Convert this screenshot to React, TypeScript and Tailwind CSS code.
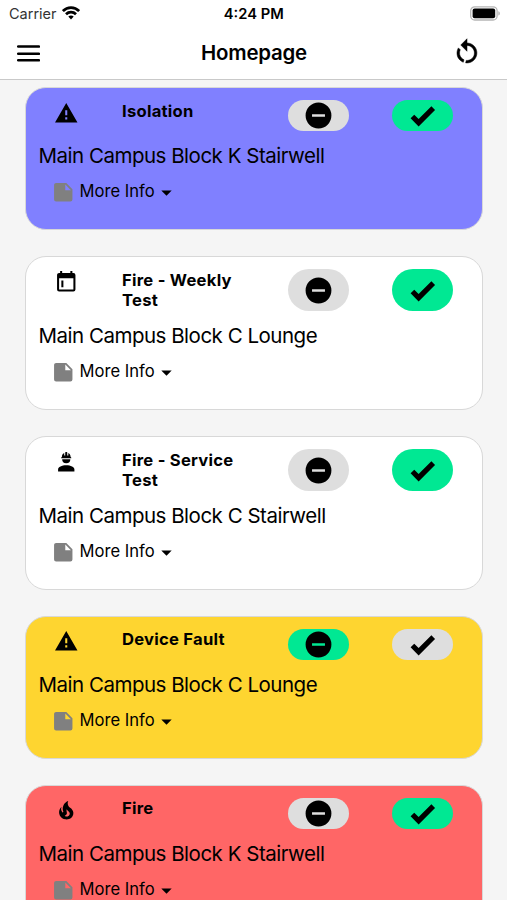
import clsx from "clsx";

const icons = {
  alert: "M13 14H11V9H13M13 18H11V16H13M1 21H23L12 2L1 21Z",
  calendar:
    "M7.2,10.2H9.2V17H7.2M19,19H5V8H19M19,3H18V1H16V3H8V1H6V3H5C3.89,3 3,3.9 3,5V19A2,2 0 0,0 5,21H19A2,2 0 0,0 21,19V5A2,2 0 0,0 19,3Z",
  engineer:
    "M12,15C7.58,15 4,16.79 4,19V21H20V19C20,16.79 16.42,15 12,15M8,9A4,4 0 0,0 12,13A4,4 0 0,0 16,9M11.5,2C11.2,2 11,2.21 11,2.5V5.5H10V3C10,3 7.75,3.86 7.75,6.75C7.75,6.75 7,6.89 7,8H17C16.95,6.89 16.25,6.75 16.25,6.75C16.25,3.86 14,3 14,3V5.5H13V2.5C13,2.21 12.81,2 12.5,2H11.5Z",
  fire: "M17.66 11.2C17.43 10.9 17.15 10.64 16.89 10.38C16.22 9.78 15.46 9.35 14.82 8.72C13.33 7.26 13 4.85 13.95 3C13 3.23 12.17 3.75 11.46 4.32C8.87 6.4 7.85 10.07 9.07 13.22C9.11 13.32 9.15 13.42 9.15 13.55C9.15 13.77 9 13.97 8.8 14.05C8.57 14.15 8.33 14.09 8.14 13.93C8.08 13.88 8.04 13.83 8 13.76C6.87 12.33 6.69 10.28 7.45 8.64C5.78 10 4.87 12.3 5 14.47C5.06 14.97 5.12 15.47 5.29 15.97C5.43 16.57 5.7 17.17 6 17.7C7.08 19.43 8.95 20.67 10.96 20.92C13.1 21.19 15.39 20.8 17.03 19.32C18.86 17.66 19.5 15 18.56 12.72L18.43 12.46C18.22 12 17.66 11.2 17.66 11.2M14.5 17.5C14.22 17.74 13.76 18 13.4 18.1C12.28 18.5 11.16 17.94 10.5 17.28C11.69 17 12.4 16.12 12.61 15.23C12.78 14.43 12.46 13.77 12.33 13C12.21 12.26 12.23 11.63 12.5 10.94C12.69 11.32 12.89 11.7 13.13 12C13.9 13 15.11 13.44 15.37 14.8C15.41 14.94 15.43 15.08 15.43 15.23C15.46 16.05 15.1 16.95 14.5 17.5Z",
  restart:
    "M12,4C14.1,4 16.1,4.8 17.6,6.3C20.7,9.4 20.7,14.5 17.6,17.6C15.8,19.5 13.3,20.2 10.9,19.9L11.4,17.9C13.1,18.1 14.9,17.5 16.2,16.2C18.5,13.9 18.5,10.1 16.2,7.7C15.1,6.6 13.5,6 12,6V10.6L7,5.6L12,0.6V4M6.3,17.6C3.7,15 3.3,11 5.1,7.9L6.6,9.4C5.5,11.6 5.9,14.4 7.8,16.2C8.3,16.7 8.9,17.1 9.6,17.4L9,19.4C8,19 7.1,18.4 6.3,17.6Z",
  minus: "M17,13H7V11H17M12,2A10,10 0 0,0 2,12A10,10 0 0,0 12,22A10,10 0 0,0 22,12A10,10 0 0,0 12,2Z",
  check: "M9,20.42L2.79,14.21L5.62,11.38L9,14.77L18.88,4.88L21.71,7.71L9,20.42Z",
  note: "M14,10V4.5L19.5,10M5,3C3.89,3 3,3.89 3,5V19A2,2 0 0,0 5,21H19A2,2 0 0,0 21,19V9L15,3H5Z",
  caret: "M7,10L12,15L17,10H7Z",
};

type IconName = keyof typeof icons;

function Icon({ name, className }: { name: IconName; className?: string }) {
  return (
    <svg viewBox="0 0 24 24" fill="currentColor" className={clsx("shrink-0", className)}>
      <path d={icons[name]} />
    </svg>
  );
}

type Event = {
  icon: IconName;
  title: string;
  place: string;
  color: string;
  accepted: boolean;
};

const events: Event[] = [
  { icon: "alert", title: "Isolation", place: "Main Campus Block K Stairwell", color: "bg-[#8080ff]", accepted: true },
  { icon: "calendar", title: "Fire - Weekly Test", place: "Main Campus Block C Lounge", color: "bg-white", accepted: true },
  { icon: "engineer", title: "Fire - Service Test", place: "Main Campus Block C Stairwell", color: "bg-white", accepted: true },
  { icon: "alert", title: "Device Fault", place: "Main Campus Block C Lounge", color: "bg-[#fed530]", accepted: false },
  { icon: "fire", title: "Fire", place: "Main Campus Block K Stairwell", color: "bg-[#ff6666]", accepted: true },
];

function PillButton({ icon, active, label, className }: { icon: IconName; active: boolean; label: string; className?: string }) {
  return (
    <button
      aria-label={label}
      className={clsx(
        "flex w-[61px] shrink-0 items-center justify-center rounded-[21px]",
        active ? "bg-[#00e893]" : "bg-[#dedede]",
        className
      )}
    >
      <Icon name={icon} className="size-[31px]" />
    </button>
  );
}

function EventCard({ event }: { event: Event }) {
  return (
    <article className={clsx("rounded-[21px] border border-[#d8d8d8] pt-3 pb-[25.2px]", event.color)}>
      <div className="flex min-h-[31px]">
        <Icon name={event.icon} className="mt-[0.5px] ml-7 size-[24.5px]" />
        <h2 className="ml-[43.5px] w-[130px] shrink-0 pt-[0.4px] text-[16.6px] leading-[20.7px] font-bold tracking-[0.25px]">
          {event.title}
        </h2>
        <PillButton icon="minus" active={!event.accepted} label="Dismiss" className="ml-[35.5px]" />
        <PillButton icon="check" active={event.accepted} label="Accept" className="ml-[43.5px]" />
      </div>
      <p className="mt-3 ml-[12.5px] text-[20.5px] leading-[26px] tracking-[-0.49px]">{event.place}</p>
      <button className="mt-[8.8px] ml-[24.5px] flex h-[26px] items-center">
        <Icon name="note" className="mt-[3px] size-[24.5px] text-[#808080]" />
        <span className="ml-[4.5px] text-[16.6px] leading-5">More Info</span>
        <Icon name="caret" className="mt-[3px] -ml-[0.5px] size-[25px]" />
      </button>
    </article>
  );
}

function StatusBar() {
  return (
    <div className="flex h-[27px] items-center justify-between pr-[6px] pl-[9px]">
      <div className="flex w-24 items-center gap-[5px] pt-px text-[14.5px] text-[#333]">
        Carrier
        <svg viewBox="0 0 18 14" className="mb-[2px] h-[14px] w-[18px] text-black" fill="none" stroke="currentColor" strokeWidth="2.7">
          <path d="M0.9 5.1C5.4 0.5 12.6 0.5 17.1 5.1" />
          <path d="M4 8.3C6.8 5.5 11.2 5.5 14 8.3" />
          <path d="M6.3 10.6C7.8 9.1 10.2 9.1 11.7 10.6L9 13.4Z" fill="currentColor" stroke="none" />
        </svg>
      </div>
      <span className="pr-[2.5px] pt-px text-[14.7px] font-semibold">4:24 PM</span>
      <div className="flex w-24 justify-end">
        <svg viewBox="0 0 31 15" className="h-[15px] w-[31px]">
          <rect x="0.7" y="0.8" width="26.4" height="13.2" rx="4" fill="#fff" stroke="#b5b5b5" strokeWidth="1.3" />
          <rect x="2.6" y="2.6" width="22.6" height="9.6" rx="2" />
          <path d="M28.3 5.2C30.4 5.8 30.4 9 28.3 9.6Z" fill="#b5b5b5" />
        </svg>
      </div>
    </div>
  );
}

export default function App() {
  return (
    <div className="h-[900px] w-full overflow-hidden bg-[#f5f5f5] font-['Inter',sans-serif] text-black">
      <header className="h-[80px] border-b border-[#c9c9c9] bg-white">
        <StatusBar />
        <div className="flex h-[52px] items-center justify-between pr-[25px] pl-[17px]">
          <button aria-label="Open menu" className="w-[39px]">
            <svg viewBox="0 0 23 17" className="h-[17px] w-[23px]" stroke="currentColor" strokeWidth="2.5" strokeLinecap="round">
              <path d="M1.2 1.5H21.9M1.2 8.7H21.9M1.2 15.3H21.9" />
            </svg>
          </button>
          <h1 className="text-[20.4px] font-semibold tracking-[-0.2px]">Homepage</h1>
          <button aria-label="Refresh">
            <Icon name="restart" className="size-[30px] stroke-current stroke-[0.4]" />
          </button>
        </div>
      </header>
      <main className="flex flex-col gap-[26px] pt-[7.4px] pr-[24.5px] pl-[25px]">
        {events.map((event, i) => (
          <EventCard key={i} event={event} />
        ))}
      </main>
    </div>
  );
}
